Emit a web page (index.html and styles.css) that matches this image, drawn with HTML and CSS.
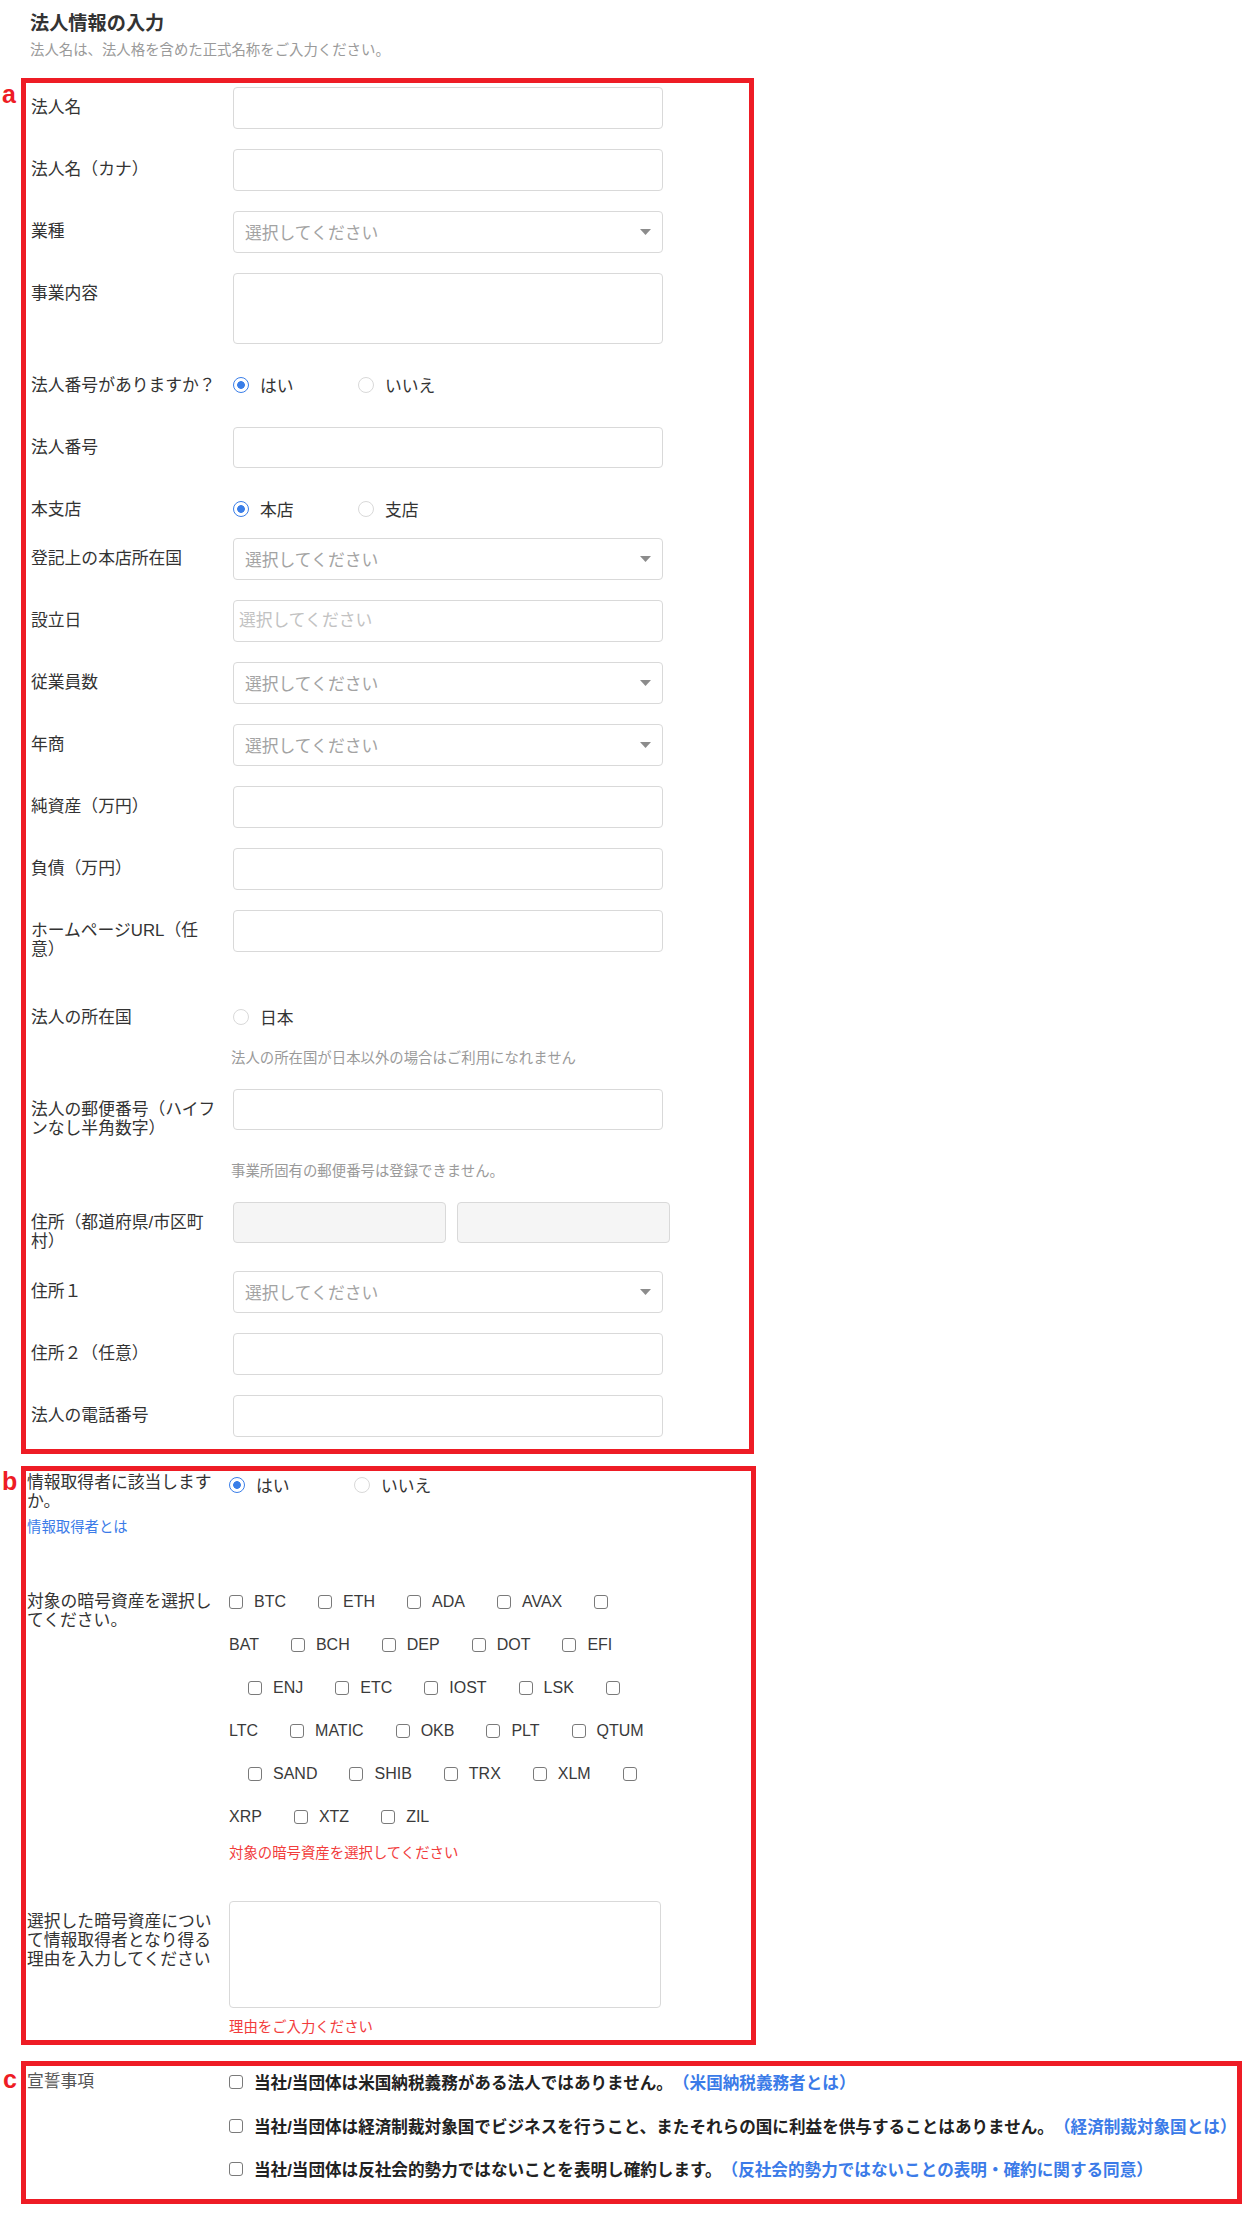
FILE: index.html
```html
<!DOCTYPE html>
<html lang="ja">
<head>
<meta charset="utf-8">
<title>法人情報の入力</title>
<link rel="stylesheet" href="styles.css">
</head>
<body>
<div class="page">
  <header class="header">
    <h1 class="title">法人情報の入力</h1>
    <p class="subtitle">法人名は、法人格を含めた正式名称をご入力ください。</p>
  </header>

  <section class="box box-a">
    <span class="tag">a</span>
    <div class="row"><div class="label">法人名</div><div class="field"><input class="input" type="text"></div></div>
    <div class="row"><div class="label">法人名（カナ）</div><div class="field"><input class="input" type="text"></div></div>
    <div class="row"><div class="label">業種</div><div class="field"><div class="select"><span>選択してください</span><svg class="caret" viewBox="0 0 11 6"><path d="M0 0h11L5.5 6z"/></svg></div></div></div>
    <div class="row"><div class="label">事業内容</div><div class="field"><textarea class="textarea"></textarea></div></div>
    <div class="row"><div class="label">法人番号がありますか？</div><div class="field"><div class="options"><label class="option"><input class="radio" type="radio" name="num" checked>はい</label><label class="option"><input class="radio" type="radio" name="num">いいえ</label></div></div></div>
    <div class="row"><div class="label">法人番号</div><div class="field"><input class="input" type="text"></div></div>
    <div class="row"><div class="label">本支店</div><div class="field"><div class="options"><label class="option"><input class="radio" type="radio" name="branch" checked>本店</label><label class="option"><input class="radio" type="radio" name="branch">支店</label></div></div></div>
    <div class="row row-tight"><div class="label">登記上の本店所在国</div><div class="field"><div class="select"><span>選択してください</span><svg class="caret" viewBox="0 0 11 6"><path d="M0 0h11L5.5 6z"/></svg></div></div></div>
    <div class="row"><div class="label">設立日</div><div class="field"><input class="input input-date" type="text" placeholder="選択してください"></div></div>
    <div class="row"><div class="label">従業員数</div><div class="field"><div class="select"><span>選択してください</span><svg class="caret" viewBox="0 0 11 6"><path d="M0 0h11L5.5 6z"/></svg></div></div></div>
    <div class="row"><div class="label">年商</div><div class="field"><div class="select"><span>選択してください</span><svg class="caret" viewBox="0 0 11 6"><path d="M0 0h11L5.5 6z"/></svg></div></div></div>
    <div class="row"><div class="label">純資産（万円）</div><div class="field"><input class="input" type="text"></div></div>
    <div class="row"><div class="label">負債（万円）</div><div class="field"><input class="input" type="text"></div></div>
    <div class="row"><div class="label">ホームページURL（任意）</div><div class="field"><input class="input" type="text"></div></div>
    <div class="row row-spaced"><div class="label">法人の所在国</div><div class="field"><div class="options"><label class="option"><input class="radio" type="radio" name="country">日本</label></div><p class="help">法人の所在国が日本以外の場合はご利用になれません</p></div></div>
    <div class="row"><div class="label">法人の郵便番号（ハイフンなし半角数字）</div><div class="field"><input class="input" type="text"><p class="help help-far">事業所固有の郵便番号は登録できません。</p></div></div>
    <div class="row"><div class="label">住所（都道府県/市区町村）</div><div class="field"><div class="address"><input class="input input-readonly" type="text" readonly><input class="input input-readonly" type="text" readonly></div></div></div>
    <div class="row"><div class="label">住所１</div><div class="field"><div class="select"><span>選択してください</span><svg class="caret" viewBox="0 0 11 6"><path d="M0 0h11L5.5 6z"/></svg></div></div></div>
    <div class="row"><div class="label">住所２（任意）</div><div class="field"><input class="input" type="text"></div></div>
    <div class="row"><div class="label">法人の電話番号</div><div class="field"><input class="input" type="text"></div></div>
  </section>

  <section class="box box-b">
    <span class="tag">b</span>
    <div class="row">
      <div class="label label-flat">
        <div>情報取得者に該当しますか。</div>
        <a class="info-link" href="#">情報取得者とは</a>
      </div>
      <div class="field"><div class="options options-compact"><label class="option"><input class="radio" type="radio" name="acq" checked>はい</label><label class="option"><input class="radio" type="radio" name="acq">いいえ</label></div></div>
    </div>
    <div class="row row-coins">
      <div class="label label-coins">対象の暗号資産を選択してください。</div>
      <div class="field">
        <div class="coin-line"><span class="coin"><input class="check" type="checkbox">BTC</span><span class="coin"><input class="check" type="checkbox">ETH</span><span class="coin"><input class="check" type="checkbox">ADA</span><span class="coin"><input class="check" type="checkbox">AVAX</span><span class="coin"><input class="check" type="checkbox"></span></div>
        <div class="coin-line"><span class="coin">BAT</span><span class="coin"><input class="check" type="checkbox">BCH</span><span class="coin"><input class="check" type="checkbox">DEP</span><span class="coin"><input class="check" type="checkbox">DOT</span><span class="coin"><input class="check" type="checkbox">EFI</span></div>
        <div class="coin-line coin-indent"><span class="coin"><input class="check" type="checkbox">ENJ</span><span class="coin"><input class="check" type="checkbox">ETC</span><span class="coin"><input class="check" type="checkbox">IOST</span><span class="coin"><input class="check" type="checkbox">LSK</span><span class="coin"><input class="check" type="checkbox"></span></div>
        <div class="coin-line"><span class="coin">LTC</span><span class="coin"><input class="check" type="checkbox">MATIC</span><span class="coin"><input class="check" type="checkbox">OKB</span><span class="coin"><input class="check" type="checkbox">PLT</span><span class="coin"><input class="check" type="checkbox">QTUM</span></div>
        <div class="coin-line coin-indent"><span class="coin"><input class="check" type="checkbox">SAND</span><span class="coin"><input class="check" type="checkbox">SHIB</span><span class="coin"><input class="check" type="checkbox">TRX</span><span class="coin"><input class="check" type="checkbox">XLM</span><span class="coin"><input class="check" type="checkbox"></span></div>
        <div class="coin-line"><span class="coin">XRP</span><span class="coin"><input class="check" type="checkbox">XTZ</span><span class="coin"><input class="check" type="checkbox">ZIL</span></div>
        <p class="error error-coins">対象の暗号資産を選択してください</p>
      </div>
    </div>
    <div class="row row-reason">
      <div class="label">選択した暗号資産について情報取得者となり得る理由を入力してください</div>
      <div class="field"><textarea class="textarea textarea-reason"></textarea><p class="error error-reason">理由をご入力ください</p></div>
    </div>
  </section>

  <section class="box box-c">
    <span class="tag">c</span>
    <div class="row">
      <div class="label label-pledge">宣誓事項</div>
      <div class="field pledges">
        <label class="pledge"><input class="check" type="checkbox"><span>当社/当団体は米国納税義務がある法人ではありません。<a class="pledge-link" href="#">（米国納税義務者とは）</a></span></label>
        <label class="pledge"><input class="check" type="checkbox"><span>当社/当団体は経済制裁対象国でビジネスを行うこと、またそれらの国に利益を供与することはありません。<a class="pledge-link" href="#">（経済制裁対象国とは）</a></span></label>
        <label class="pledge"><input class="check" type="checkbox"><span>当社/当団体は反社会的勢力ではないことを表明し確約します。<a class="pledge-link" href="#">（反社会的勢力ではないことの表明・確約に関する同意）</a></span></label>
      </div>
    </div>
  </section>
</div>
</body>
</html>
```

FILE: styles.css
```css
* {
  box-sizing: border-box;
}

html,
body {
  margin: 0;
  padding: 0;
  background: #fff;
}

body {
  font-family: "Liberation Sans", "Noto Sans CJK JP", sans-serif;
  color: #333;
  text-spacing-trim: space-all;
}

.page {
  width: 1242px;
  padding: 12px 0 21px 21px;
}

.header {
  padding-left: 9px;
}

.title {
  margin: 0;
  font-size: 19.2px;
  line-height: 24px;
  font-weight: bold;
  color: #333;
}

.subtitle {
  margin: 3.5px 0 0;
  font-size: 14.4px;
  line-height: 20px;
  color: #9a9a9a;
}

/* annotation frames */
.box {
  position: relative;
  border: 5px solid #ee1c25;
}

.box-a {
  width: 733px;
  margin-top: 18.5px;
  padding: 4px 0 12.5px 5px;
}

.box-b {
  width: 735px;
  margin-top: 12px;
  padding: 2px 0 3px 1px;
}

.box-c {
  width: 1221px;
  margin-top: 16px;
  padding: 4px 0 18px 1px;
}

.tag {
  position: absolute;
  left: -24px;
  font: bold 25px/1 "Liberation Sans", sans-serif;
  color: #ee1c25;
}

.box-a .tag { top: -1px; }
.box-b .tag { top: -2px; }
.box-c .tag { top: 1px; left: -23px; }

/* form rows */
.row {
  display: flex;
  align-items: flex-start;
  margin-top: 20.5px;
}

.row:first-of-type {
  margin-top: 0;
}

.row-tight { margin-top: 8px; }
.row-spaced { margin-top: 37.5px; }
.row-coins { margin-top: 43px; }
.row-reason { margin-top: 38px; }

.label {
  flex: 0 0 202px;
  padding: 11px 12px 0 0;
  font-size: 16.8px;
  line-height: 19px;
  color: #333;
}

.label-flat {
  padding-top: 0;
}

.label-coins {
  padding-top: 12px;
}

.label-pledge {
  padding-top: 0;
  line-height: 24px;
  color: #555;
}

.field {
  flex: 0 0 auto;
}

.input {
  display: block;
  margin: 0;
  width: 430px;
  height: 41.5px;
  padding: 0 5px;
  border: 1px solid #d9d9d9;
  border-radius: 4px;
  background: #fff;
  font: 16.8px "Liberation Sans", "Noto Sans CJK JP", sans-serif;
  color: #333;
  outline: none;
}

.input::placeholder {
  color: #c2c2c2;
}

.input-readonly {
  width: 213px;
  background: #f5f5f5;
}

.address {
  display: flex;
  gap: 11px;
}

.select {
  display: flex;
  align-items: center;
  justify-content: space-between;
  width: 430px;
  height: 41.5px;
  padding: 0 11px;
  border: 1px solid #d9d9d9;
  border-radius: 4px;
  background: #fff;
  font-size: 16.8px;
  color: #a3a3a3;
}

.caret {
  width: 11px;
  height: 6px;
  fill: #8c8c8c;
}

.textarea {
  display: block;
  margin: 0;
  width: 430px;
  height: 71px;
  border: 1px solid #d9d9d9;
  border-radius: 4px;
  background: #fff;
  resize: none;
  outline: none;
}

.textarea-reason {
  width: 432px;
  height: 107px;
}

/* radios */
.options {
  display: flex;
  align-items: center;
  height: 41.5px;
}

.options-compact {
  height: 24px;
}

.option {
  display: flex;
  align-items: center;
  gap: 11px;
  width: 125px;
  font-size: 16.8px;
  color: #333;
}

.radio {
  appearance: none;
  flex: 0 0 16px;
  width: 16px;
  height: 16px;
  margin: 0;
  border: 1px solid #d9d9d9;
  border-radius: 50%;
  background: #fff;
}

.radio:checked {
  border-color: #3a7ee8;
  background: radial-gradient(circle, #3a7ee8 0 3.5px, #fff 4.2px);
}

.help {
  margin: 10px 0 0 -2px;
  font-size: 14.4px;
  line-height: 20px;
  color: #9a9a9a;
}

.help-far {
  margin-top: 31px;
}

/* crypto checkboxes */
.coin-line {
  display: flex;
  align-items: center;
  height: 43px;
  column-gap: 32px;
  font-size: 16px;
  color: #3a3a3a;
}

.coin-indent {
  padding-left: 19px;
}

.coin {
  display: flex;
  align-items: center;
  gap: 11px;
}

.check {
  appearance: none;
  flex: 0 0 14px;
  width: 14px;
  height: 14px;
  margin: 0;
  border: 1.3px solid #7a7a7a;
  border-radius: 3px;
  background: #fff;
}

.error {
  margin: 0;
  font-size: 14.4px;
  line-height: 20px;
  color: #f23c3c;
}

.error-coins { margin-top: 5px; }
.error-reason { margin-top: 9px; }

.info-link {
  display: block;
  margin-top: 6px;
  font-size: 14.4px;
  line-height: 20px;
  color: #3b7be8;
  text-decoration: none;
}

/* pledges */
.pledges {
  display: flex;
  flex-direction: column;
  gap: 19.5px;
}

.pledge {
  display: flex;
  align-items: center;
  gap: 11px;
  height: 24px;
  white-space: nowrap;
  font-size: 16.6px;
  font-weight: bold;
  color: #222;
}

.pledge-link {
  display: inline-block;
  color: #3b7be8;
  text-decoration: none;
}
```
